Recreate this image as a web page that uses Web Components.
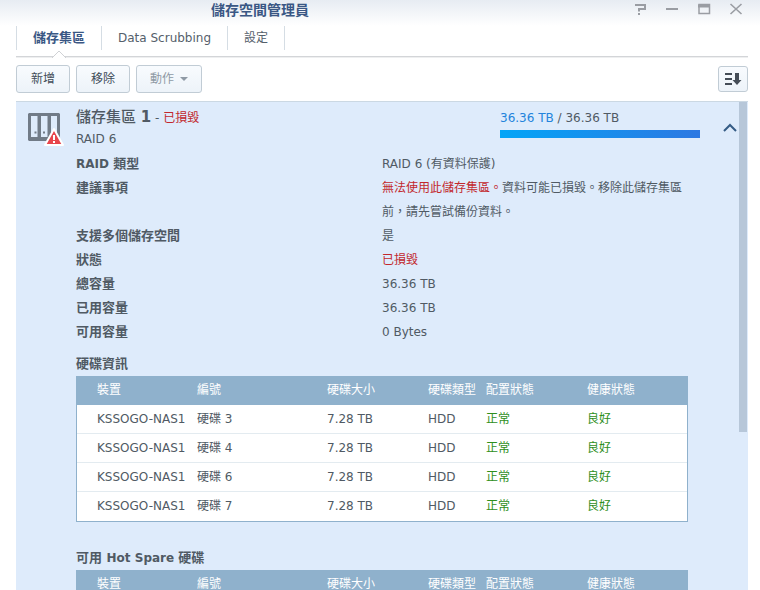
<!DOCTYPE html>
<html lang="zh-Hant">
<head>
<meta charset="utf-8">
<meta name="viewport" content="width=device-width, initial-scale=1">
<title>儲存空間管理員</title>
<style>
  html, body { height: 100%; margin: 0; }
  body {
    --ink: #505a64; --navy: #3a5784; --red: #c2282d; --green: #2f8f1c; --panel: #deebfb; --head: #8fb1cc;
    font: 12px/24px "DejaVu Sans", "Noto Sans CJK TC", sans-serif;
    color: var(--ink); background: #fff; overflow: hidden;
  }
  .red { color: var(--red); }
</style>
</head>
<body>
<storage-window>
  <title-bar slot="title">儲存空間管理員</title-bar>
  <tab-bar slot="tabs">
    <tab-item selected>儲存集區</tab-item>
    <tab-item>Data Scrubbing</tab-item>
    <tab-item>設定</tab-item>
  </tab-bar>
  <tool-bar slot="tools">
    <tool-button>新增</tool-button>
    <tool-button>移除</tool-button>
    <tool-button menu disabled>動作</tool-button>
    <sort-button slot="end"></sort-button>
  </tool-bar>
  <pool-panel>
    <pool-header slot="header" used="36.36 TB" total="36.36 TB">
      <span slot="name">儲存集區 <b>1</b></span>
      <span slot="status">已損毀</span>
      <span slot="type">RAID 6</span>
    </pool-header>
    <detail-list>
      <detail-row label="RAID 類型">RAID 6 (有資料保護)</detail-row>
      <detail-row label="建議事項"><span class="red">無法使用此儲存集區。</span><span>資料可能已損毀。移除此儲存集區</span><span>前，請先嘗試備份資料。</span></detail-row>
      <detail-row label="支援多個儲存空間">是</detail-row>
      <detail-row label="狀態"><span class="red">已損毀</span></detail-row>
      <detail-row label="總容量">36.36 TB</detail-row>
      <detail-row label="已用容量">36.36 TB</detail-row>
      <detail-row label="可用容量">0 Bytes</detail-row>
    </detail-list>
    <disk-table heading="硬碟資訊" disks="3,4,6,7"></disk-table>
    <disk-table heading="可用 Hot Spare 硬碟" disks=""></disk-table>
  </pool-panel>
</storage-window>

<script>
const define = (name, markup, setup) => customElements.define(name, class extends HTMLElement {
  constructor() {
    super();
    const root = this.attachShadow({ mode: "open" });
    const t = document.createElement("template");
    t.innerHTML = markup;
    root.append(t.content.cloneNode(true));
  }
  connectedCallback() { if (setup) setup(this, this.shadowRoot); }
});

// Latin words in bold labels are set one size smaller than the Chinese ones.
const mixed = text => text.replace(/[A-Za-z][A-Za-z ]*/g, "<small>$&</small>");

define("storage-window", `
  <style>
    :host { display: flex; flex-direction: column; height: 100vh; }
    .body { flex: 1; min-height: 0; display: flex; flex-direction: column; padding: 0 12px 0 16px; }
  </style>
  <slot name="title"></slot>
  <main class="body"><slot name="tabs"></slot><slot name="tools"></slot><slot></slot></main>`);

define("title-bar", `
  <style>
    :host { display: grid; grid-template-columns: 13fr 6fr; height: 26px; background: linear-gradient(#e7ecf2, #fff); }
    h1 { margin: 0; text-align: center; font-size: 14px; line-height: 20px; color: var(--navy); }
    .controls { display: flex; justify-content: flex-end; padding-right: 8px; }
    button { width: 32px; height: 18px; padding: 0; border: 0; background: none; display: grid; place-items: center; }
    svg { width: 14px; height: 14px; fill: none; stroke: #9a9da3; stroke-width: 2; display: block; }
  </style>
  <h1><slot></slot></h1>
  <div class="controls">
    <button aria-label="說明"><svg viewBox="0 0 14 14"><path d="M2 3H12V7H6V9.500M6 11V13" stroke-width="2"/></svg></button>
    <button aria-label="最小化"><svg viewBox="0 0 14 14"><path d="M1 7H13"/></svg></button>
    <button aria-label="最大化"><svg viewBox="0 0 14 14"><path d="M2 11.500V2.500H12.500V11.500Z" stroke-width="1.500"/><path d="M1 4H13" stroke-width="3"/></svg></button>
    <button aria-label="關閉"><svg viewBox="0 0 14 14"><path d="M1.500 2L12.500 12M12.500 2L1.500 12" stroke-width="1.600"/></svg></button>
  </div>`);

define("tab-bar", `
  <style>
    :host { display: block; border-bottom: 1px solid #d3d5d8; box-shadow: 0 1px 0 #eeeff0; }
    div { display: flex; height: 30px; }
    div::after { content: ""; height: 24px; border-left: 1px solid #d5dde4; }
  </style>
  <div role="tablist"><slot></slot></div>`);

define("tab-item", `
  <style>
    :host { display: block; position: relative; }
    button { font: inherit; color: #55606b; height: 24px; padding: 0 16px; border: 0; border-left: 1px solid #d5dde4; background: none; }
    svg { display: none; }
    :host([selected]) button { font-size: 13px; font-weight: bold; color: var(--navy); }
    :host([selected]) svg { display: block; position: absolute; left: 50%; bottom: -2px; width: 16px; height: 8px; margin-left: -8px; }
  </style>
  <button role="tab"><slot></slot></button>
  <svg viewBox="0 0 16 8"><path d="M1 8L8 1L15 8" fill="#fff" stroke="#d0d2d5"/></svg>`,
  (el, r) => r.querySelector("button").setAttribute("aria-selected", el.hasAttribute("selected")));

define("tool-bar", `
  <style>
    :host { display: flex; justify-content: space-between; align-items: center; padding: 8px 0; }
    div { display: flex; gap: 6px; }
  </style>
  <div><slot></slot></div><slot name="end"></slot>`);

const buttonStyle = `
    :host { display: block; }
    button { display: flex; align-items: center; justify-content: center; height: 28px; padding: 0 14px; font: inherit; color: #414c58;
      border: 1px solid #c1ccd5; border-radius: 3px; background: linear-gradient(#f8fbfe, #edf3f9); }`;

define("tool-button", `
  <style>${buttonStyle}
    button:disabled { color: #8f9aa5; padding: 0 13px; }
    i { display: none; border: 4px solid transparent; border-top-color: #8f9aa5; border-bottom: 0; margin-left: 6px; }
    :host([menu]) i { display: block; }
  </style>
  <button><slot></slot><i></i></button>`,
  (el, r) => { r.querySelector("button").disabled = el.hasAttribute("disabled"); });

define("sort-button", `
  <style>${buttonStyle}
    button { width: 30px; height: 26px; padding: 0; }
    svg { display: block; width: 18px; height: 14px; }
  </style>
  <button aria-label="排序"><svg viewBox="0 0 18 14"><path d="M1 2H8M1 7H8M1 12H8" stroke="#454d57" stroke-width="2"/><path d="M11 1H15V8H17.500L13 13L8.500 8H11Z" fill="#454d57"/></svg></button>`);

define("pool-panel", `
  <style>
    :host { flex: 1; min-height: 0; display: flex; background: var(--panel); border-top: 1px solid #cbd8e3; }
    section { flex: 1; min-width: 0; overflow-y: auto; scrollbar-width: none; }
    .content { padding: 0 51px 0 60px; }
    .track { width: 8px; margin-right: 1px; }
    .thumb { height: 67.6%; background: #b7c7d9; }
  </style>
  <section><slot name="header"></slot><div class="content"><slot></slot></div></section>
  <div class="track"><div class="thumb"></div></div>`);

define("pool-header", `
  <style>
    :host { display: flex; height: 50px; padding-left: 10px; }
    .icon { width: 38px; height: 38px; margin: 8px 12px 0 0; }
    .text { flex: 1; padding-top: 4px; }
    h2 { margin: 0; font-size: 12px; line-height: 22px; font-weight: normal; }
    .name { font-size: 15px; font-weight: 500; }
    .status { color: var(--red); }
    p { margin: 0; line-height: 20px; }
    .usage { width: 200px; padding-top: 4px; }
    .used { color: #2383dc; }
    [role=progressbar] { height: 8px; background: linear-gradient(90deg, #03a5f7, #2d78e2); }
    button { width: 39px; padding: 2px 0 0 23px; border: 0; background: none; }
    button svg { display: block; width: 14px; height: 10px; }
  </style>
  <svg class="icon" viewBox="0 0 38 38">
    <path fill="#717b87" fill-rule="evenodd" d="M3 3H33L34 4V30L33 31H3L2 30V4ZM5 6V27H11.500V6ZM15 6V27H21.500V6ZM25 6V27H31V6Z"/>
    <path d="M8.500 22.500H10.500M17 22.500H19" stroke="#717b87" stroke-width="2"/>
    <path d="M28 19L37 35H19Z" fill="#e8454b" stroke="#fff" stroke-width="2" stroke-linejoin="round"/>
    <path d="M28 25V30M28 31V33" stroke="#fff" stroke-width="2"/>
  </svg>
  <div class="text">
    <h2><span class="name"><slot name="name"></slot></span> - <span class="status"><slot name="status"></slot></span></h2>
    <p><slot name="type"></slot></p>
  </div>
  <div class="usage">
    <div><span class="used"></span> / <span class="total"></span></div>
    <div role="progressbar" aria-label="已用容量" aria-valuenow="100"></div>
  </div>
  <button aria-label="收合"><svg viewBox="0 0 14 10"><path d="M1 8L7 2L13 8" fill="none" stroke="#355c85" stroke-width="2"/></svg></button>`,
  (el, r) => {
    r.querySelector(".used").textContent = el.getAttribute("used");
    r.querySelector(".total").textContent = el.getAttribute("total");
  });

define("detail-list", `
  <style>:host { display: block; padding-bottom: 8px; }</style>
  <slot></slot>`);

define("detail-row", `
  <style>
    :host { display: block; }
    dl { margin: 0; display: grid; grid-template-columns: 1fr 1fr; }
    dt { font-size: 13px; font-weight: bold; }
    dd { margin: 0; }
    small { font-size: 12px; }
  </style>
  <dl><dt></dt><dd><slot></slot></dd></dl>`,
  (el, r) => { r.querySelector("dt").innerHTML = mixed(el.getAttribute("label")); });

define("disk-table", `
  <style>
    :host { display: block; margin-bottom: 24px; }
    h3 { margin: 0; font-size: 13px; line-height: 24px; }
    small { font-size: 12px; }
    table { width: 100%; table-layout: fixed; border-spacing: 0; background: #fff; border: 1px solid var(--head); border-top: 0; }
    th, td { height: 28px; padding: 0 0 0 4px; text-align: left; font-weight: normal; white-space: nowrap; }
    th { background: var(--head); color: #fff; border-bottom: 1px solid var(--head); }
    td { border-bottom: 1px solid #e3ebf0; }
    tr:last-child td { border-bottom-color: #fff; }
    th:first-child, td:first-child { padding-left: 20px; }
    .ok { color: var(--green); }
    .c1 { width: 116px; } .c2 { width: 130px; } .c3, .c5 { width: 101px; } .c4 { width: 58px; }
  </style>
  <h3 id="h"></h3>
  <table aria-labelledby="h">
    <colgroup><col class="c1"><col class="c2"><col class="c3"><col class="c4"><col class="c5"><col></colgroup>
    <thead><tr><th>裝置</th><th>編號</th><th>硬碟大小</th><th>硬碟類型</th><th>配置狀態</th><th>健康狀態</th></tr></thead>
    <tbody></tbody>
  </table>`,
  (el, r) => {
    r.querySelector("h3").innerHTML = mixed(el.getAttribute("heading"));
    r.querySelector("tbody").innerHTML = el.getAttribute("disks").split(",").filter(Boolean).map(n =>
      `<tr><td>KSSOGO-NAS1</td><td>硬碟 ${n}</td><td>7.28 TB</td><td>HDD</td><td class="ok">正常</td><td class="ok">良好</td></tr>`).join("");
  });
</script>
</body>
</html>
